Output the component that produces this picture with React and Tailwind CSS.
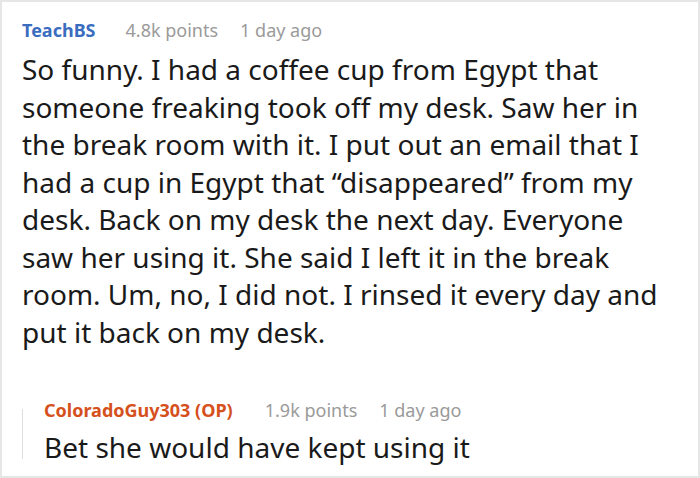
export default function App() {
  return (
    <div className="w-[700px] h-[478px] border-2 border-[#e6e6e6] bg-white font-['Noto_Sans',sans-serif] overflow-hidden">
      <div className="pl-5 pr-10 pt-4">
        {/* Comment header */}
        <div className="flex items-center text-[18px] leading-6">
          <span className="mr-[30px] font-bold text-[#3a6dc0]">TeachBS</span>
          <span className="mr-[22px] text-[#9a9a9a]">4.8k points</span>
          <span className="text-[#9a9a9a]">1 day ago</span>
        </div>
        <p className="mt-[9px] text-[28px] leading-[37.5px] text-[#1a1a1a]">
          So funny. I had a coffee cup from Egypt that someone freaking took off my desk. Saw her in the break room with it. I put out an email that I had a cup in Egypt that “disappeared” from my desk. Back on my desk the next day. Everyone saw her using it. She said I left it in the break room. Um, no, I did not. I rinsed it every day and put it back on my desk.
        </p>

        {/* Reply */}
        <div className="mt-[47px] flex items-start">
          <div className="mt-[11px] h-[50px] w-px bg-[#dedede]" />
          <div className="pl-[21px]">
            <div className="flex items-center text-[18px] leading-6">
              <span className="mr-[32px] font-bold text-[#d5501c]">ColoradoGuy303 (OP)</span>
              <span className="mr-[22px] text-[#9a9a9a]">1.9k points</span>
              <span className="text-[#9a9a9a]">1 day ago</span>
            </div>
            <p className="mt-[7px] text-[28px] leading-[37.5px] text-[#1a1a1a]">Bet she would have kept using it</p>
          </div>
        </div>
      </div>
    </div>
  )
}
